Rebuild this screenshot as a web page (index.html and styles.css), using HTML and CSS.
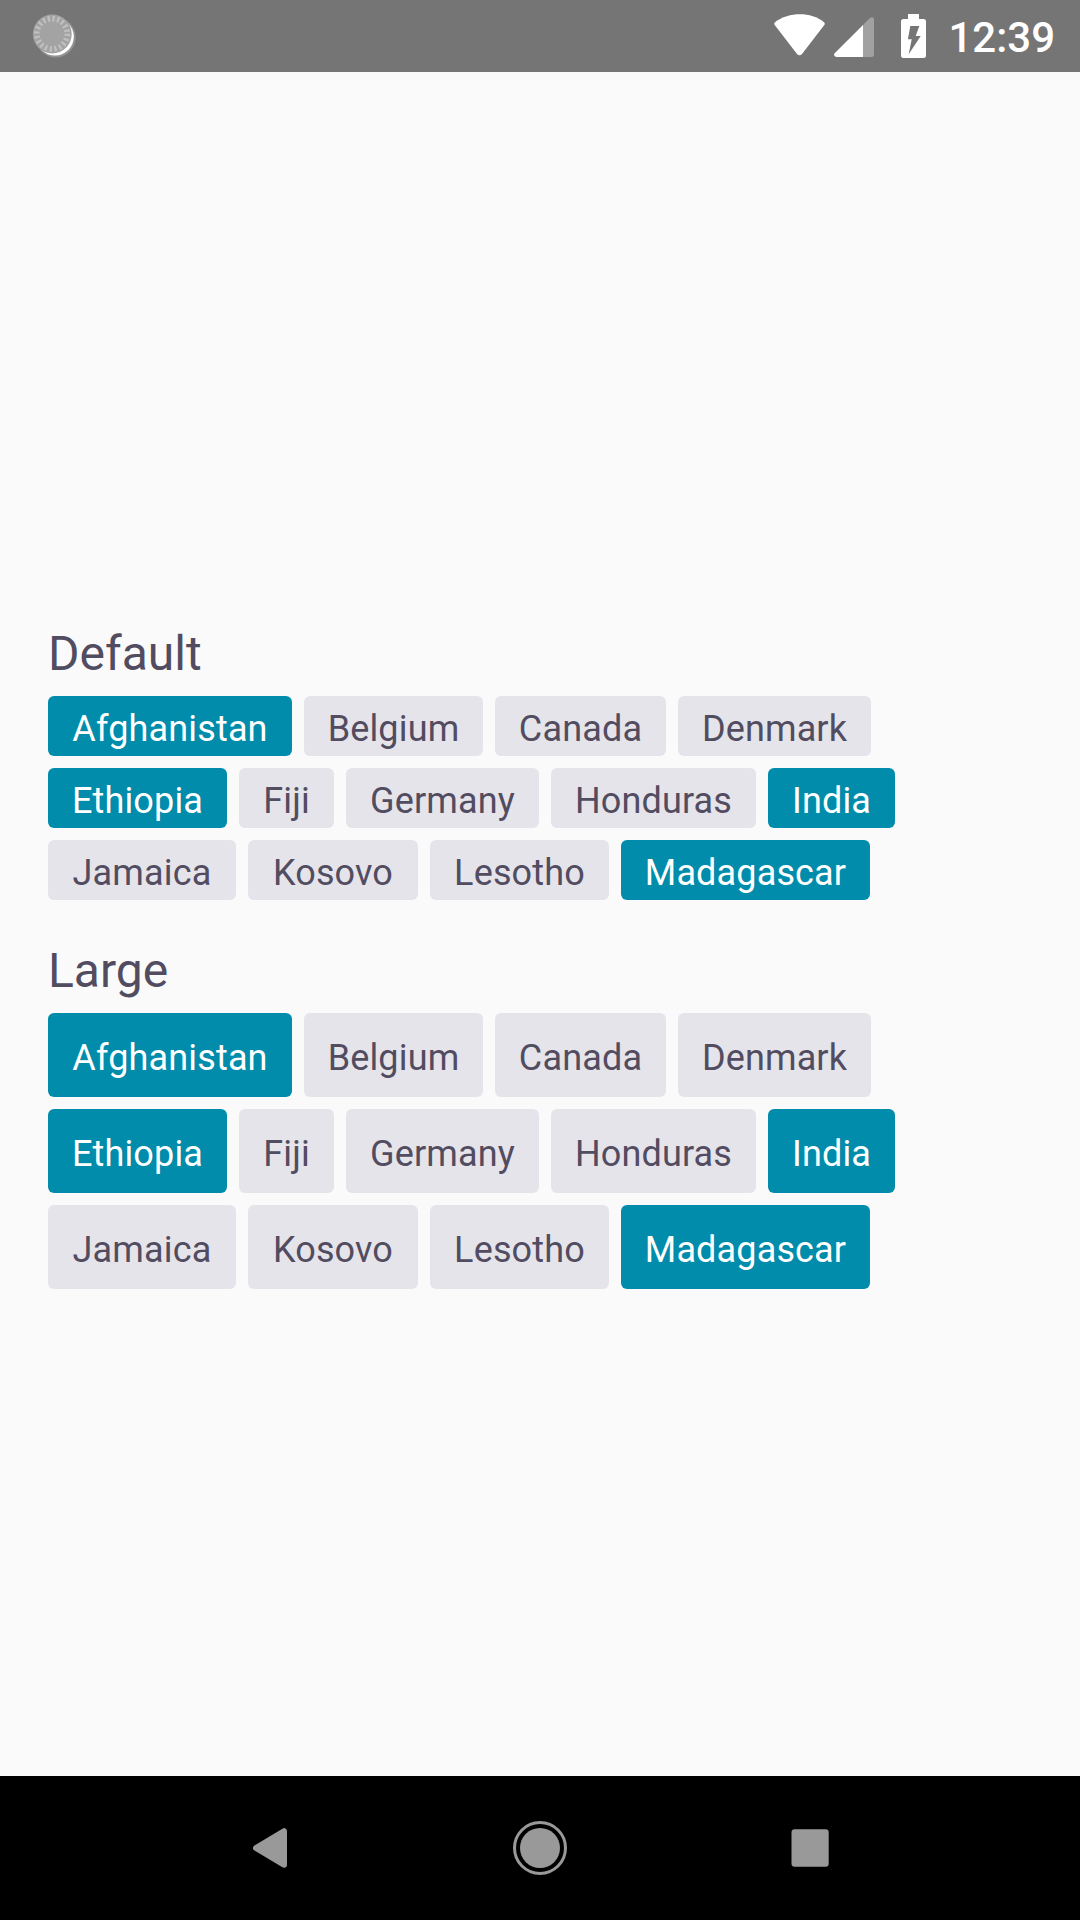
FILE: index.html
```html
<!DOCTYPE html>
<html lang="en">
<head>
<meta charset="utf-8">
<title>Chips</title>
<link rel="stylesheet" href="styles.css">
</head>
<body>
<div class="screen">
  <header class="status-bar">
    <svg class="sync-icon" width="48" height="48" viewBox="0 0 48 48">
      <circle cx="24.7" cy="26.4" r="20" fill="#fff" opacity=".22"/>
      <circle cx="24" cy="25.8" r="18.8" fill="#fff"/>
      <circle cx="21.3" cy="23" r="19.4" fill="#a3a3a3"/>
      <circle cx="21" cy="22.8" r="15.2" fill="none" stroke="#c0c0c0" stroke-width="5.6" stroke-dasharray="2.2 2.575"/>
    </svg>
    <div class="indicators">
      <svg class="wifi-icon" width="52" height="42" viewBox="0 0 52 42">
        <path d="M1 8.2C15-2.4 37-2.4 50 8.2Q51.4 9.4 50.3 11L28 40Q25.5 42.6 23 40L.7 11Q-.4 9.4 1 8.2Z" fill="#fff"/>
      </svg>
      <svg class="signal-icon" width="40" height="40" viewBox="0 0 40 40">
        <path d="M29 8 36 .9Q37.5-.3 39 .5 40 1.2 40 2.5V37.5Q40 40 37.5 40H29Z" fill="#a1a1a1"/>
        <path d="M29 8V40H2.5Q-1.2 39.5.7 36.2Z" fill="#fff"/>
      </svg>
      <svg class="battery-icon" width="25" height="44" viewBox="0 0 25 44">
        <path d="M7 0H18V5H22.5Q25 5 25 7.5V41.5Q25 44 22.5 44H2.5Q0 44 0 41.5V7.5Q0 5 2.5 5H7Z" fill="#fff"/>
        <path d="M9.3 12H18.3L14.7 22H19.7L7.7 40.2 10.7 25.3H6.9Z" fill="#757575"/>
      </svg>
      <span class="clock">12:39</span>
    </div>
  </header>

  <main class="content">
    <section class="group">
      <h2 class="title">Default</h2>
      <div class="chips">
        <div class="row row-1"><span class="chip selected">Afghanistan</span><span class="chip">Belgium</span><span class="chip">Canada</span><span class="chip">Denmark</span></div>
        <div class="row row-2"><span class="chip selected">Ethiopia</span><span class="chip">Fiji</span><span class="chip">Germany</span><span class="chip">Honduras</span><span class="chip selected">India</span></div>
        <div class="row row-3"><span class="chip">Jamaica</span><span class="chip">Kosovo</span><span class="chip">Lesotho</span><span class="chip selected">Madagascar</span></div>
      </div>
    </section>
    <section class="group large">
      <h2 class="title">Large</h2>
      <div class="chips">
        <div class="row row-1"><span class="chip selected">Afghanistan</span><span class="chip">Belgium</span><span class="chip">Canada</span><span class="chip">Denmark</span></div>
        <div class="row row-2"><span class="chip selected">Ethiopia</span><span class="chip">Fiji</span><span class="chip">Germany</span><span class="chip">Honduras</span><span class="chip selected">India</span></div>
        <div class="row row-3"><span class="chip">Jamaica</span><span class="chip">Kosovo</span><span class="chip">Lesotho</span><span class="chip selected">Madagascar</span></div>
      </div>
    </section>
  </main>

  <nav class="nav-bar">
    <svg width="90" height="90" viewBox="0 0 90 90">
      <path d="M31 45 59 28.2V61.8Z" fill="#999" stroke="#999" stroke-width="6" stroke-linejoin="round"/>
    </svg>
    <svg width="90" height="90" viewBox="0 0 90 90">
      <circle cx="45" cy="45" r="25.5" fill="none" stroke="#999" stroke-width="3"/>
      <circle cx="45" cy="45" r="20" fill="#999"/>
    </svg>
    <svg width="90" height="90" viewBox="0 0 90 90">
      <rect x="26.5" y="26.3" width="37.2" height="37.5" rx="3" fill="#999"/>
    </svg>
  </nav>
</div>
</body>
</html>
```
FILE: styles.css
```css
* { box-sizing: border-box; }

body {
  margin: 0;
  font-family: Roboto, sans-serif;
  background: #fafafa;
  color: #524c61;
}

.screen {
  display: flex;
  flex-direction: column;
  width: 1080px;
  height: 1920px;
}

.status-bar {
  display: flex;
  justify-content: space-between;
  height: 72px;
  padding: 0 25px 0 31px;
  background: #757575;
}

.sync-icon { margin-top: 11px; }

.indicators { display: flex; align-items: flex-start; }

.wifi-icon { margin: 14px 8px 0 0; }
.signal-icon { margin: 17px 27px 0 0; }
.battery-icon { margin: 14px 22px 0 0; }

.clock {
  color: #fff;
  font-size: 42px;
  font-weight: 500;
  line-height: 75px;
}

.content {
  flex: 1;
  display: flex;
  flex-direction: column;
  gap: 43px;
  padding: 554px 48px 0;
}

.title {
  margin: 0 0 14px;
  font-size: 48px;
  font-weight: 400;
  line-height: 56px;
}

.chips { display: flex; flex-direction: column; gap: 12px; }

.row { display: grid; gap: 12px; }
.row-1 { grid-template-columns: 244px 179px 171px 193px; }
.row-2 { grid-template-columns: 179px 95px 193px 205px 127px; }
.row-3 { grid-template-columns: 188px 170px 179px 249px; }

.chip {
  height: 60px;
  padding-top: 6px;
  border-radius: 6px;
  background: #e5e4ea;
  font-size: 36px;
  letter-spacing: .15px;
  line-height: 55px;
  text-align: center;
  white-space: nowrap;
}

.large .chip { height: 84px; line-height: 79px; }

.selected { background: #008caa; color: #fff; }

.nav-bar {
  display: flex;
  justify-content: center;
  gap: 180px;
  height: 144px;
  padding-top: 27px;
  background: #000;
}
```
